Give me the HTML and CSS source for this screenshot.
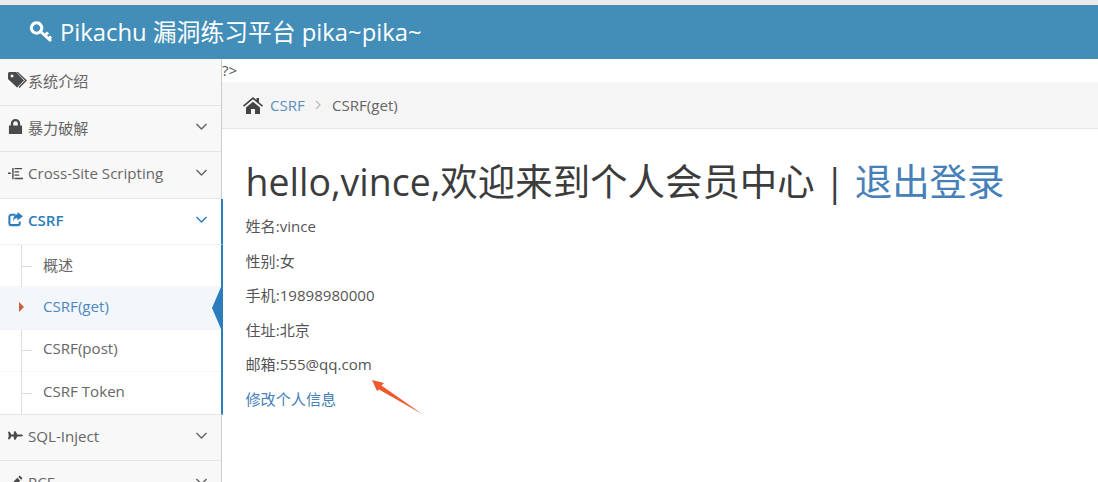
FILE: index.html
```html
<!DOCTYPE html>
<html lang="zh">
<head>
<meta charset="utf-8">
<title>Pikachu</title>
<link rel="stylesheet" href="styles.css">
</head>
<body>
<header class="navbar">
  <svg class="brand-icon" viewBox="0 0 23 22"><path fill="none" stroke="#fff" stroke-width="3" d="M7 1.800a5.200 5.200 0 1 0 .1 0zM11 10.500L21.500 20M15.500 14.500l3-3M19 18l2.500-2.500"/></svg>
  <span class="brand">Pikachu 漏洞练习平台 pika~pika~</span>
</header>
<div class="main">
  <nav class="sidebar">
    <a class="item first"><svg class="ico" viewBox="0 0 20 17"><path fill-rule="evenodd" d="M0 1.500A1.500 1.500 0 0 1 1.500 0H8l8 8.500L9 15.500 0 7zM4 2.500a1.500 1.500 0 1 0 .1 0zM10 0l9 8.500-7.500 7.500-1-1L17 8.500 8.500 0z"/></svg><span class="label tight">系统介绍</span></a>
    <a class="item"><svg class="ico" viewBox="0 0 16 16"><path fill-rule="evenodd" d="M1 7h2V5a5 5 0 0 1 10 0v2h2v9H1zM5.500 7h5V5a2.500 2.500 0 0 0-5 0z"/></svg><span class="label">暴力破解</span><svg class="chev" viewBox="0 0 12 8"><path d="M1 1l5 5 5-5"/></svg></a>
    <a class="item"><svg class="ico" viewBox="0 0 16 16"><path d="M0 7h3v1.500H0zM4.500 2H6v12H4.500zM7 2h8v1.500H7zM7 5.500h5V7H7zM7 9h5v1.500H7zM7 12.500h9V14H7z"/></svg><span class="label">Cross-Site Scripting</span><svg class="chev" viewBox="0 0 12 8"><path d="M1 1l5 5 5-5"/></svg></a>
    <a class="item active"><svg class="ico" viewBox="0 0 16 16"><path fill="none" stroke="currentColor" stroke-width="2.200" d="M8 3H3.500A2 2 0 0 0 1.500 5v7a2 2 0 0 0 2 2h7a2 2 0 0 0 2-2v-2"/><path d="M10 0l6 4.500L10 9V6.500C8 6.500 6.500 7.500 5.500 10 5.500 6 7 3 10 2.500z"/></svg><span class="label">CSRF</span><svg class="chev" viewBox="0 0 12 8"><path d="M1 1l5 5 5-5"/></svg></a>
    <ul class="submenu">
      <li class="sub"><a>概述</a></li>
      <li class="sub current"><a>CSRF(get)</a></li>
      <li class="sub"><a>CSRF(post)</a></li>
      <li class="sub"><a>CSRF Token</a></li>
    </ul>
    <a class="item"><svg class="ico" viewBox="0 0 16 16"><path d="M0 4h2l1.500 3H6l.5-3.500H8L10 7h3.500C15 7 16 7.500 16 8s-1 1-2.500 1H10l-2 3.500H6.500L6 9H3.500L2 12H0l.8-4z"/></svg><span class="label">SQL-Inject</span><svg class="chev" viewBox="0 0 12 8"><path d="M1 1l5 5 5-5"/></svg></a>
    <a class="item"><svg class="ico" viewBox="0 0 16 16"><path d="M1 15l1-4 8-8 3 3-8 8zM11 2l1.500-1.500 3 3L14 5z"/></svg><span class="label">RCE</span><svg class="chev" viewBox="0 0 12 8"><path d="M1 1l5 5 5-5"/></svg></a>
  </nav>
  <div class="content">
    <div class="stray">?&gt;</div>
    <div class="crumbs">
      <svg class="home" viewBox="0 0 20 17"><path d="M10 0l3.500 3V1h2.500v4.300L20 8.500l-1 1.200L10 2.300 1 9.700 0 8.500zM3 10.500l7-5.800 7 5.800V17h-5v-5H8v5H3z"/></svg>
      <a class="crumb-link">CSRF</a>
      <svg class="sep" viewBox="0 0 6 10"><path d="M1 1l4 4-4 4"/></svg>
      <span>CSRF(get)</span>
    </div>
    <div class="page">
      <h1 class="title">hello,vince,欢迎来到个人会员中心 | <a class="link">退出登录</a></h1>
      <p class="row">姓名:vince</p>
      <p class="row">性别:女</p>
      <p class="row">手机:19898980000</p>
      <p class="row">住址:北京</p>
      <p class="row">邮箱:555@qq.com</p>
      <a class="link edit">修改个人信息</a>
    </div>
  </div>
</div>
<svg class="annot" viewBox="0 0 50 34"><path d="M0 0L12 3 9.500 5.500 50 34 7 9.500 5 11z"/></svg>
</body>
</html>
```
FILE: styles.css
```css
* { box-sizing: border-box; }
html, body { margin: 0; height: 482px; overflow: hidden; }
body {
  position: relative;
  background: #fff;
  color: #393939;
  font-family: "Open Sans", "Noto Sans CJK SC", sans-serif;
  font-size: 15.100px;
  border-top: 5px solid #ebebeb;
  display: flex;
  flex-direction: column;
}
.navbar {
  height: 54px;
  flex: none;
  background: #438eb9;
  color: #fff;
  display: flex;
  align-items: center;
  padding-left: 29px;
  gap: 7px;
}
.brand-icon { width: 24px; height: 22px; }
.brand { font-size: 23.800px; padding-bottom: 3px; }
.main { flex: 1; display: flex; min-height: 0; }
.sidebar {
  width: 222px;
  flex: none;
  background: #f2f2f2;
  border-right: 1px solid #ccc;
  display: flex;
  flex-direction: column;
}
.item {
  flex: none;
  height: 46.500px;
  display: flex;
  align-items: center;
  padding-left: 8px;
  padding-bottom: 3.500px;
  color: #666;
  background: #f8f8f8;
  border-bottom: 1px solid #e5e5e5;
  fill: #4a4a4a;
}
.item.active {
  color: #2b7dbc;
  fill: #2b7dbc;
  background: #fff;
  border-bottom-color: #f0f0f0;
  margin-right: -2px;
  border-right: 2px solid #2b7dbc;
  font-weight: 600;
}
.ico { width: 15px; height: 15px; flex: none; margin-right: 5px; }
.item.first .ico { width: 20px; height: 17px; margin-right: 0; }
.label { flex: 1; }
.chev { width: 13px; height: 8px; flex: none; margin-right: 13px; fill: none; stroke: currentColor; stroke-width: 1.500; }
.submenu {
  position: relative;
  list-style: none;
  margin: 0 -2px 0 0;
  padding: 0;
  background: #fff;
  border-right: 2px solid #2b7dbc;
  border-bottom: 1px solid #e5e5e5;
}
.submenu::before {
  content: "";
  position: absolute;
  left: 21px; top: 0; bottom: 0;
  border-left: 1px solid #ddd;
}
.sub {
  position: relative;
  height: 42px;
  display: flex;
  align-items: center;
  padding-left: 43px;
  padding-bottom: 4px;
  color: #666;
  border-bottom: 1px dotted #eee;
}
.sub::before {
  content: "";
  position: absolute;
  left: 22px; top: 50%; width: 10px;
  border-top: 1px solid #ddd;
}
.sub:last-child { border-bottom: 0; }
.sub.current { background: #f3f7fb; color: #4b88c0; height: 42.500px; }
.sub.current::before {
  left: 19px; top: 15px; width: 0;
  border-top: 5px solid transparent;
  border-bottom: 5px solid transparent;
  border-left: 5px solid #c86139;
}
.sub.current::after {
  content: "";
  position: absolute;
  right: 0; top: 0;
  border-top: 21px solid transparent;
  border-bottom: 21px solid transparent;
  border-right: 9px solid #2b7dbc;
}
.content { flex: 1; min-width: 0; }
.stray { height: 23px; line-height: 22px; font-size: 15px; color: #555; }
.crumbs {
  height: 47px;
  display: flex;
  align-items: center;
  padding-left: 21px;
  background: #f5f5f5;
  border-bottom: 1px solid #e5e5e5;
  color: #666;
}
.home { width: 20px; height: 17px; fill: #444; margin-right: 7px; }
.crumb-link { color: #5b90bf; }
.sep { width: 6px; height: 10px; margin: 0 10.500px; fill: none; stroke: #bbb; stroke-width: 1.200; }
.page { padding: 0 23.500px; }
.title {
  margin: 28px 0 7px;
  font-size: 37.450px;
  font-weight: 400;
  line-height: 50px;
  color: #3c3c3c;
}
.link { color: #4580b8; }
.row { margin: 0 0 10.500px; line-height: 24px; color: #555; height: 24px; }
.edit { display: block; line-height: 24px; }
.annot {
  position: absolute;
  left: 372px; top: 375px;
  width: 50px; height: 34px;
  fill: #ee5a2c;
}
```
